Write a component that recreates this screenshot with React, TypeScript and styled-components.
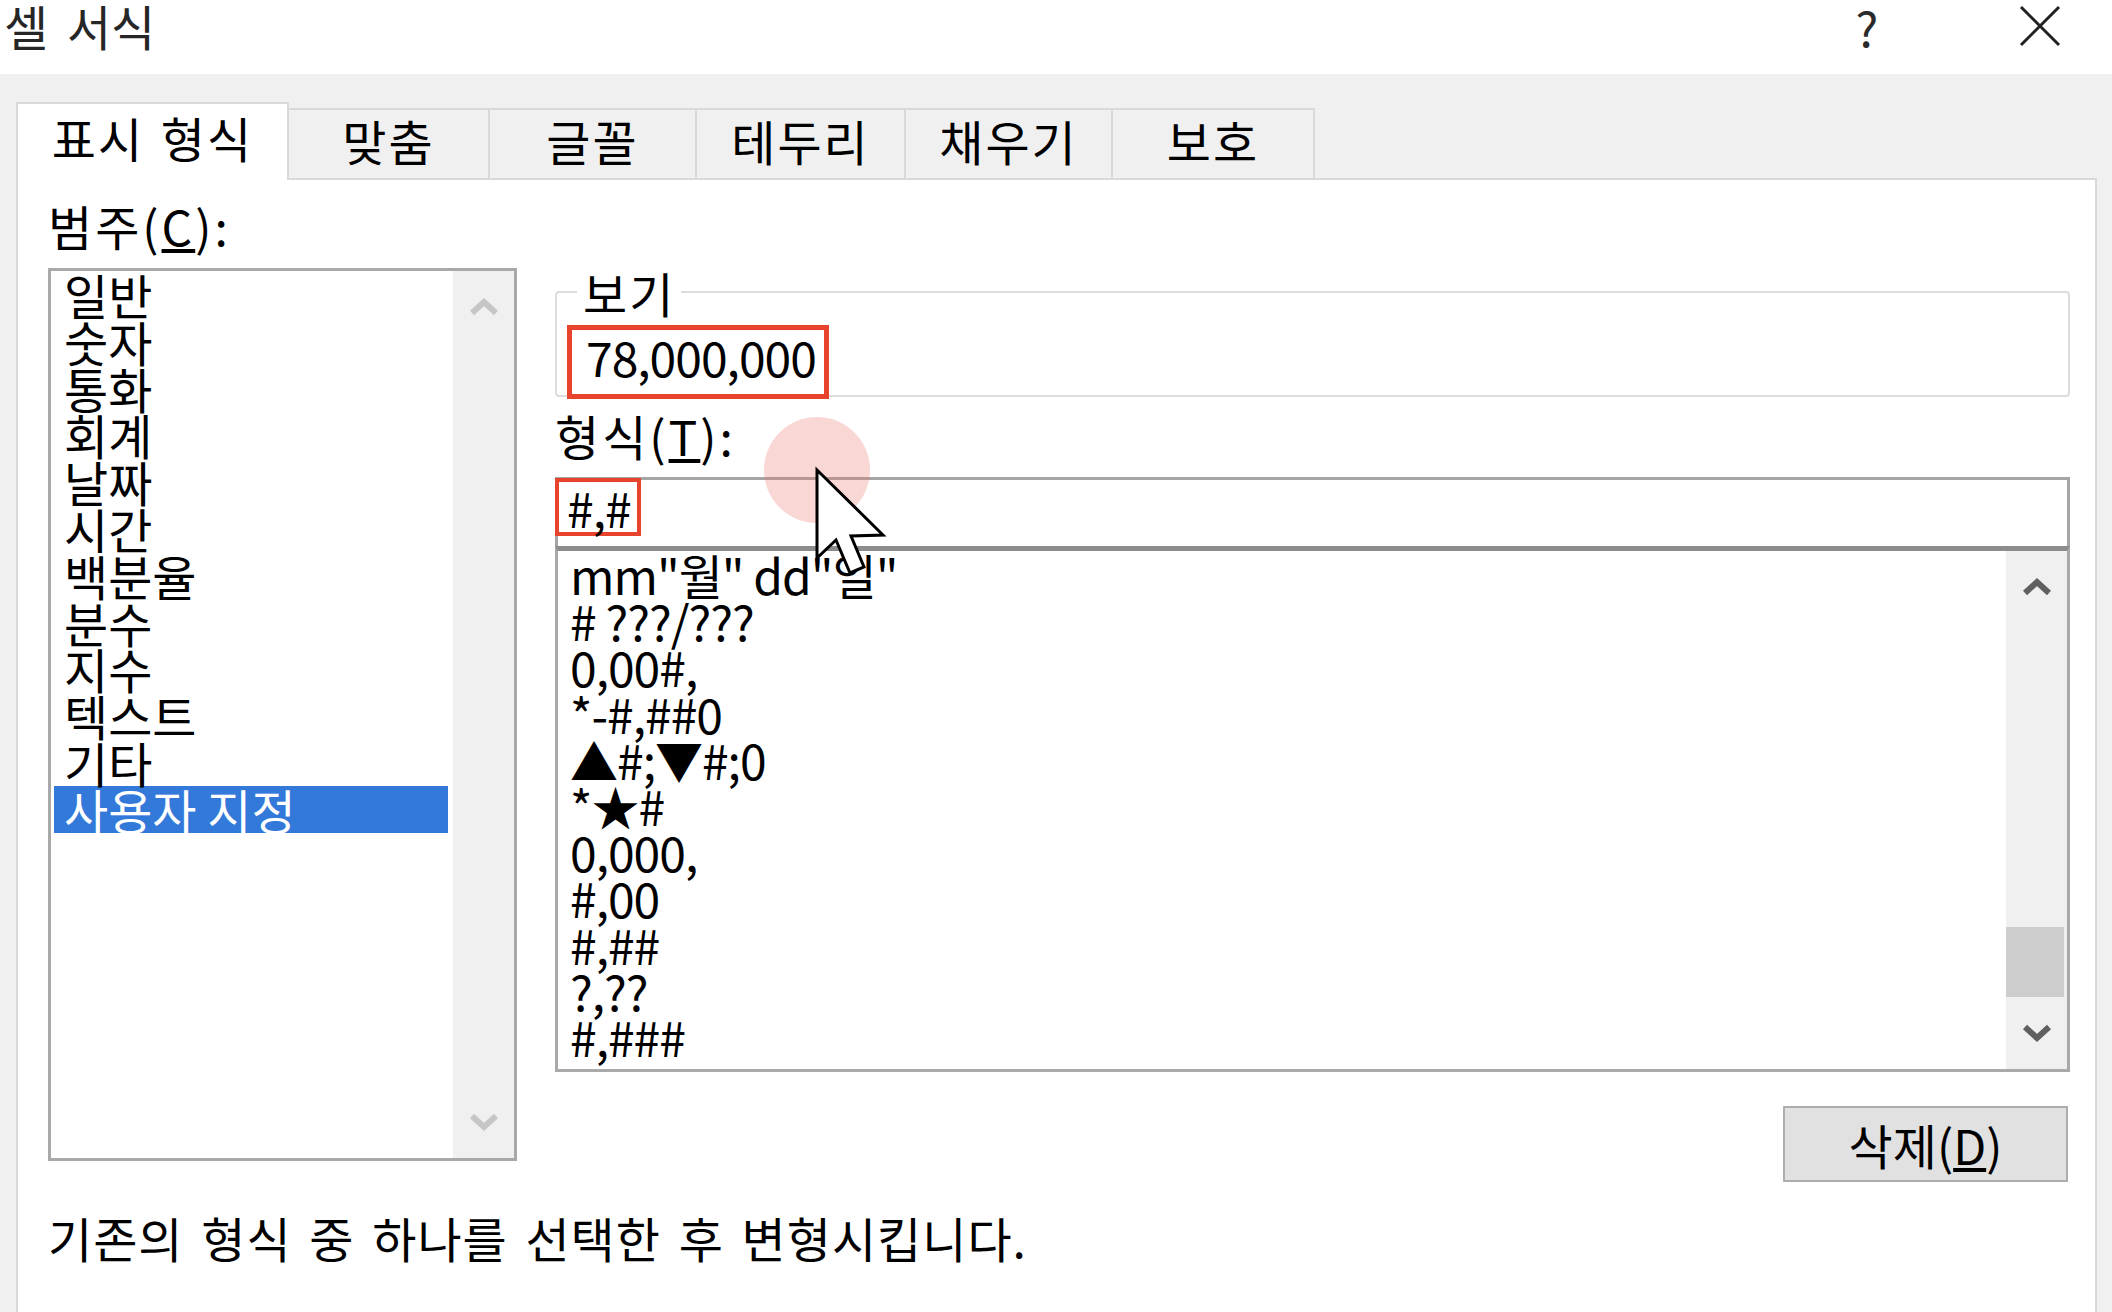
import React from "react";
import styled, { createGlobalStyle } from "styled-components";

const GlobalStyle = createGlobalStyle`
  html, body { margin: 0; padding: 0; background: #f0f0f0; }
  body { font-family: "Noto Sans CJK KR", "Noto Sans", sans-serif; color: #000; }
  * { box-sizing: border-box; }
`;

const Window = styled.div`
  position: relative;
  width: 2112px;
  height: 1312px;
  overflow: hidden;
  background: #f0f0f0;
  display: flex;
  flex-direction: column;
  font-size: 48px;
`;

const TitleBar = styled.div`
  flex: none;
  height: 74px;
  background: #fff;
  display: flex;
  align-items: flex-start;
  gap: 73px;
  padding: 0 22px 0 4px;
`;

const Title = styled.div`
  flex: 1;
  font-size: 48px;
  line-height: 50px;
  word-spacing: 8px;
  color: #262626;
`;

const TitleButton = styled.div`
  width: 100px;
  height: 52px;
  display: flex;
  align-items: center;
  justify-content: center;
  font-size: 48px;
  line-height: 52px;
  color: #2a2a2a;
`;

const Body = styled.div`
  flex: 1;
  min-height: 0;
  display: flex;
  flex-direction: column;
  padding: 27px 15px 0 16px;
`;

const TabStrip = styled.div`
  flex: none;
  height: 77px;
  display: flex;
  align-items: flex-end;
`;

const Tab = styled.div<{ $active?: boolean; $w: number }>`
  position: relative;
  z-index: ${(p) => (p.$active ? 1 : 0)};
  width: ${(p) => p.$w}px;
  height: ${(p) => (p.$active ? 78 : 70)}px;
  margin-bottom: ${(p) => (p.$active ? -2 : 0)}px;
  background: ${(p) => (p.$active ? "#fff" : "#f0f0f0")};
  border: 2px solid #d9d9d9;
  border-bottom: none;
  border-left-width: ${(p) => (p.$active ? 2 : 0)}px;
  padding-bottom: ${(p) => (p.$active ? 10 : 8)}px;
  display: flex;
  align-items: center;
  justify-content: center;
  font-size: 48px;
  line-height: 48px;
  letter-spacing: 2px;
  word-spacing: 4px;
  white-space: nowrap;
`;

const Panel = styled.div`
  flex: 1;
  background: #fff;
  border: 2px solid #d9d9d9;
  border-bottom: none;
  padding: 22px 25px 0 30px;
  display: flex;
  flex-direction: column;
`;

const MainRow = styled.div`
  display: flex;
  align-items: flex-start;
  gap: 38px;
`;

const LeftCol = styled.div`
  flex: none;
  width: 469px;
  display: flex;
  flex-direction: column;
`;

const FieldLabel = styled.div<{ $mt?: number; $mb: number }>`
  height: 46px;
  line-height: 46px;
  font-size: 48px;
  letter-spacing: 3px;
  margin-top: ${(p) => p.$mt ?? 0}px;
  margin-bottom: ${(p) => p.$mb}px;
  white-space: nowrap;
`;

const ListBox = styled.div<{ $h: number; $topBorder?: string }>`
  height: ${(p) => p.$h}px;
  background: #fff;
  border: 3px solid #a9a9a9;
  border-top: ${(p) => p.$topBorder ?? "3px solid #a9a9a9"};
  display: flex;
`;

const CategoryItems = styled.div`
  flex: 1;
  padding: 0 5px 0 3px;
`;

const CategoryRow = styled.div<{ $selected?: boolean }>`
  height: 46.8px;
  line-height: 46.8px;
  padding-left: 10px;
  font-size: 48px;
  white-space: nowrap;
  background: ${(p) => (p.$selected ? "#3379d9" : "transparent")};
  color: ${(p) => (p.$selected ? "#fff" : "#000")};
`;

const FormatItems = styled.div`
  flex: 1;
  padding-left: 12px;
`;

const FormatRow = styled.div`
  height: 46.2px;
  line-height: 46.2px;
  font-size: 48px;
  letter-spacing: -1px;
  white-space: pre;
`;

const ScrollCol = styled.div`
  flex: none;
  width: 61px;
  background: #f0f0f0;
  display: flex;
  flex-direction: column;
`;

const ArrowBtn = styled.div`
  flex: none;
  height: 72px;
  display: flex;
  align-items: center;
  justify-content: center;
`;

const Track = styled.div`
  flex: 1;
  display: flex;
  flex-direction: column;
  justify-content: flex-end;
`;

const Thumb = styled.div`
  height: 70px;
  margin-right: 3px;
  background: #cdcdcd;
`;

const RightCol = styled.div`
  flex: 1;
  min-width: 0;
  display: flex;
  flex-direction: column;
  padding-top: 66px;
`;

const GroupBox = styled.fieldset`
  margin: 0;
  min-width: 0;
  padding: 0 0 0 10px;
  border: 2px solid #dcdcdc;
  border-radius: 4px;
`;

const Legend = styled.legend`
  margin-left: 10px;
  padding: 0 6px;
  font-size: 48px;
  line-height: 48px;
  height: 48px;
  letter-spacing: 2px;
`;

const Marked = styled.div<{ $h: number; $bw: number; $pl: number; $pb?: number }>`
  display: inline-flex;
  align-items: center;
  height: ${(p) => p.$h}px;
  border: ${(p) => p.$bw}px solid #e8432d;
  padding: 0 8px ${(p) => p.$pb ?? 0}px ${(p) => p.$pl}px;
  font-size: 48px;
  line-height: 1;
  letter-spacing: -1px;
  white-space: nowrap;
`;

const PreviewMark = styled(Marked)`
  margin-top: 9px;
  margin-bottom: -4px;
`;

const InputMark = styled(Marked)`
  margin: -2px 0 0 -3px;
  padding-right: 6px;
`;

const FormatInput = styled.div`
  height: 69px;
  background: #fff;
  border: 3px solid #a5a5a5;
  border-bottom: none;
  display: flex;
  align-items: flex-start;
`;

const ButtonRow = styled.div`
  margin-top: 34px;
  padding-right: 2px;
  display: flex;
  justify-content: flex-end;
`;

const PushButton = styled.button`
  width: 285px;
  height: 76px;
  padding: 0;
  border: 2px solid #adadad;
  background: #e1e1e1;
  color: #000;
  font-family: inherit;
  font-size: 48px;
  line-height: 1;
  display: flex;
  align-items: center;
  justify-content: center;
`;

const Description = styled.div`
  margin-top: 32px;
  font-size: 48px;
  line-height: 46px;
  letter-spacing: 1px;
  word-spacing: 6px;
  white-space: nowrap;
`;

const CursorOverlay = styled.svg`
  position: absolute;
  left: 764px;
  top: 417px;
  pointer-events: none;
`;

const Chevron: React.FC<{ up?: boolean; color: string }> = ({ up, color }) => (
  <svg width="32" height="20" viewBox="0 0 32 20">
    <polyline
      points={up ? "4,16 16,5 28,16" : "4,4 16,15 28,4"}
      fill="none"
      stroke={color}
      strokeWidth="6"
      strokeLinejoin="miter"
    />
  </svg>
);

const tabs: { label: string; w: number; active?: boolean }[] = [
  { label: "표시 형식", w: 273, active: true },
  { label: "맞춤", w: 201 },
  { label: "글꼴", w: 207 },
  { label: "테두리", w: 209 },
  { label: "채우기", w: 207 },
  { label: "보호", w: 202 },
];

const categories = [
  "일반",
  "숫자",
  "통화",
  "회계",
  "날짜",
  "시간",
  "백분율",
  "분수",
  "지수",
  "텍스트",
  "기타",
  "사용자 지정",
];

const formats = [
  'mm"월" dd"일"',
  "# ???/???",
  "0,00#,",
  "*-#,##0",
  "▲#;▼#;0",
  "*★#",
  "0,000,",
  "#,00",
  "#,##",
  "?,??",
  "#,###",
];

export default function App() {
  return (
    <>
      <GlobalStyle />
      <Window>
        <TitleBar>
          <Title>셀 서식</Title>
          <TitleButton>?</TitleButton>
          <TitleButton>
            <svg width="44" height="44" viewBox="0 0 44 44">
              <path d="M3 3 L41 41 M41 3 L3 41" stroke="#222" strokeWidth="3" fill="none" />
            </svg>
          </TitleButton>
        </TitleBar>
        <Body>
          <TabStrip>
            {tabs.map((t) => (
              <Tab key={t.label} $active={t.active} $w={t.w}>
                {t.label}
              </Tab>
            ))}
          </TabStrip>
          <Panel>
            <MainRow>
              <LeftCol>
                <FieldLabel $mb={20}>
                  범주(<u>C</u>):
                </FieldLabel>
                <ListBox $h={893}>
                  <CategoryItems>
                    {categories.map((c) => (
                      <CategoryRow key={c} $selected={c === "사용자 지정"}>
                        {c}
                      </CategoryRow>
                    ))}
                  </CategoryItems>
                  <ScrollCol>
                    <ArrowBtn>
                      <Chevron up color="#c6c6c6" />
                    </ArrowBtn>
                    <Track />
                    <ArrowBtn>
                      <Chevron color="#c6c6c6" />
                    </ArrowBtn>
                  </ScrollCol>
                </ListBox>
              </LeftCol>
              <RightCol>
                <GroupBox>
                  <Legend>보기</Legend>
                  <PreviewMark $h={74} $bw={5} $pl={14} $pb={12}>
                    78,000,000
                  </PreviewMark>
                </GroupBox>
                <FieldLabel $mt={15} $mb={19}>
                  형식(<u>T</u>):
                </FieldLabel>
                <FormatInput>
                  <InputMark $h={58} $bw={4} $pl={8}>
                    #,#
                  </InputMark>
                </FormatInput>
                <ListBox $h={526} $topBorder="5px solid #8c8c8c">
                  <FormatItems>
                    {formats.map((f) => (
                      <FormatRow key={f}>{f}</FormatRow>
                    ))}
                  </FormatItems>
                  <ScrollCol>
                    <ArrowBtn>
                      <Chevron up color="#606060" />
                    </ArrowBtn>
                    <Track>
                      <Thumb />
                    </Track>
                    <ArrowBtn>
                      <Chevron color="#606060" />
                    </ArrowBtn>
                  </ScrollCol>
                </ListBox>
                <ButtonRow>
                  <PushButton>
                    삭제(<u>D</u>)
                  </PushButton>
                </ButtonRow>
              </RightCol>
            </MainRow>
            <Description>기존의 형식 중 하나를 선택한 후 변형시킵니다.</Description>
          </Panel>
        </Body>
        <CursorOverlay width="140" height="180" viewBox="0 0 140 180">
          <circle cx="53" cy="53" r="53" fill="rgba(235,110,100,0.28)" />
          <g transform="translate(53 53)">
            <polygon
              points="0,0 0,88 19,70 33,103 47,97 34,66 66,65"
              fill="#fff"
              stroke="#000"
              strokeWidth="3"
              strokeLinejoin="miter"
            />
          </g>
        </CursorOverlay>
      </Window>
    </>
  );
}
